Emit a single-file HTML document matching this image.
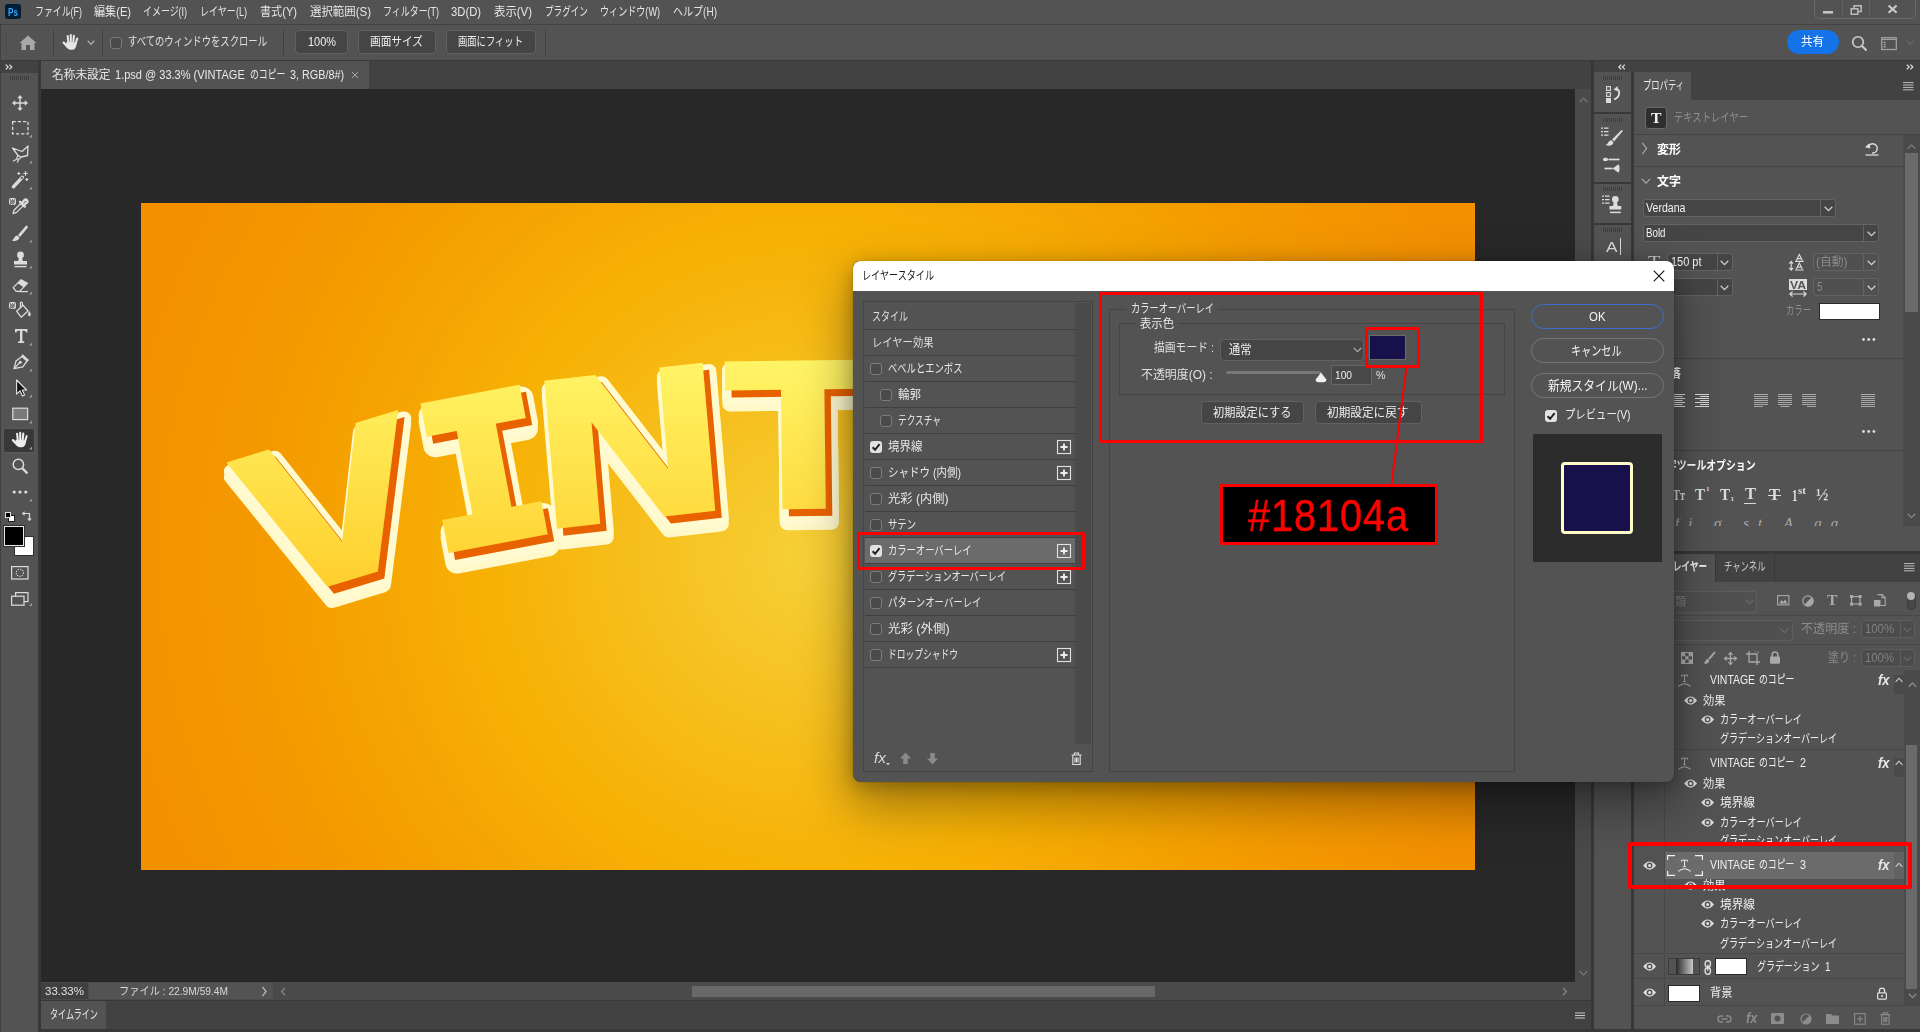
<!DOCTYPE html>
<html lang="ja"><head><meta charset="utf-8"><title>Photoshop - レイヤースタイル</title>
<style>
html,body{margin:0;padding:0;}
body{width:1920px;height:1032px;overflow:hidden;position:relative;background:#535353;font-family:"Liberation Sans","Noto Sans CJK JP",sans-serif;}
.b{position:absolute;box-sizing:border-box;}
.t{position:absolute;white-space:nowrap;transform-origin:0 50%;display:block;}
svg{overflow:visible;}

</style></head><body>
<div class="b" style="left:0px;top:0px;width:1920px;height:24px;background:#535353;"></div>
<div class="b" style="left:0px;top:24px;width:1920px;height:1px;background:#424242;"></div>
<div class="b" style="left:5px;top:4px;width:16px;height:15px;background:#001e36;border-radius:3px;"></div>
<span class="t" style="left:8.3px;top:3.6px;font-size:10.5px;line-height:16.5px;color:#31a8ff;font-weight:700;transform:scaleX(0.779);">Ps</span>
<span class="t" style="left:35px;top:2.5px;font-size:12px;line-height:18px;color:#e6e6e6;transform:scaleX(0.742);">ファイル(F)</span>
<span class="t" style="left:94px;top:2.5px;font-size:12px;line-height:18px;color:#e6e6e6;transform:scaleX(0.925);">編集(E)</span>
<span class="t" style="left:143px;top:2.5px;font-size:12px;line-height:18px;color:#e6e6e6;transform:scaleX(0.745);">イメージ(I)</span>
<span class="t" style="left:200px;top:2.5px;font-size:12px;line-height:18px;color:#e6e6e6;transform:scaleX(0.754);">レイヤー(L)</span>
<span class="t" style="left:260px;top:2.5px;font-size:12px;line-height:18px;color:#e6e6e6;transform:scaleX(0.925);">書式(Y)</span>
<span class="t" style="left:310px;top:2.5px;font-size:12px;line-height:18px;color:#e6e6e6;transform:scaleX(0.953);">選択範囲(S)</span>
<span class="t" style="left:383px;top:2.5px;font-size:12px;line-height:18px;color:#e6e6e6;transform:scaleX(0.746);">フィルター(T)</span>
<span class="t" style="left:451px;top:2.5px;font-size:12px;line-height:18px;color:#e6e6e6;transform:scaleX(0.938);">3D(D)</span>
<span class="t" style="left:494px;top:2.5px;font-size:12px;line-height:18px;color:#e6e6e6;transform:scaleX(0.950);">表示(V)</span>
<span class="t" style="left:545px;top:2.5px;font-size:12px;line-height:18px;color:#e6e6e6;transform:scaleX(0.716);">プラグイン</span>
<span class="t" style="left:600px;top:2.5px;font-size:12px;line-height:18px;color:#e6e6e6;transform:scaleX(0.756);">ウィンドウ(W)</span>
<span class="t" style="left:673px;top:2.5px;font-size:12px;line-height:18px;color:#e6e6e6;transform:scaleX(0.835);">ヘルプ(H)</span>
<svg class="b" style="left:1814px;top:0px;" width="104" height="20" viewBox="0 0 104 20"><path d="M0.5 0 V13 Q0.5 18.5 6 18.5 H96 Q101.5 18.5 101.5 13 V0" fill="none" stroke="#6a6a6a" stroke-width="1"/>
<path d="M28.5 0 V18 M55.5 0 V18" stroke="#626262" stroke-width="1"/>
<rect x="9" y="11" width="10" height="2.6" fill="#c4c4c4"/>
<path d="M37.2 8.8 h6.6 v5.4 h-6.6 z M40 8.4 v-2.6 h7.2 v5.6 h-3" fill="none" stroke="#bcbcbc" stroke-width="1.5"/>
<path d="M74.6 5.4 l8 7.4 M82.6 5.4 l-8 7.4" stroke="#c8c8c8" stroke-width="2.1"/></svg>
<div class="b" style="left:0px;top:25px;width:1920px;height:35px;background:#535353;"></div>
<div class="b" style="left:0px;top:60px;width:1920px;height:1px;background:#3a3a3a;"></div>
<div class="b" style="left:5px;top:33px;width:2px;height:19px;background:repeating-linear-gradient(#484848 0 1px,transparent 1px 2px);"></div>
<svg class="b" style="left:19px;top:35px;" width="18" height="16" viewBox="0 0 18 16"><path d="M9 0.5 L0.5 8 H2.5 V15 H7 V10 H11 V15 H15.5 V8 H17.5 Z" fill="#a8a8a8"/></svg>
<div class="b" style="left:53px;top:30px;width:1px;height:25px;background:#404040;"></div>
<svg class="b" style="left:61.5px;top:32.5px;" width="18" height="18" viewBox="0 0 18 18"><path d="M4.2 9.2 C4 11.5 4 13.6 5.6 15.4 C7.2 17.2 11.8 17.2 13.2 15.2 C14.4 13.4 14.6 11.4 14.6 9.8 Z" fill="#e6e6e6"/><path d="M6.4 10 L5.7 3.1 M8.8 10 L8.8 2.1 M11.2 10 L11.9 2.9 M13.5 11 L15.2 5.6" stroke="#e6e6e6" stroke-width="2.1" stroke-linecap="round" fill="none"/><path d="M5.6 14 L1.6 9.6" stroke="#e6e6e6" stroke-width="2.3" stroke-linecap="round" fill="none"/></svg>
<svg class="b" style="left:87px;top:40px;" width="8" height="6" viewBox="0 0 8 6"><path d="M0.7 0.8 L4 4.2 L7.3 0.8" fill="none" stroke="#aaa" stroke-width="1.3"/></svg>
<div class="b" style="left:102px;top:30px;width:1px;height:25px;background:#404040;"></div>
<div class="b" style="left:110px;top:37px;width:12px;height:12px;background:#4a4a4a;border:1px solid #7a7a7a;border-radius:3px;"></div>
<span class="t" style="left:128px;top:33.0px;font-size:12px;line-height:18px;color:#e0e0e0;transform:scaleX(0.778);">すべてのウィンドウをスクロール</span>
<div class="b" style="left:283px;top:30px;width:1px;height:25px;background:#404040;"></div>
<div class="b" style="left:295px;top:30px;width:53px;height:24px;background:#454545;border:1px solid #616161;border-radius:4px;"></div>
<span class="t" style="left:308px;top:33.0px;font-size:12px;line-height:18px;color:#f0f0f0;transform:scaleX(0.912);">100%</span>
<div class="b" style="left:358px;top:30px;width:78px;height:24px;background:#454545;border:1px solid #616161;border-radius:4px;"></div>
<span class="t" style="left:370px;top:33.0px;font-size:12px;line-height:18px;color:#f0f0f0;transform:scaleX(0.889);">画面サイズ</span>
<div class="b" style="left:446px;top:30px;width:90px;height:24px;background:#454545;border:1px solid #616161;border-radius:4px;"></div>
<span class="t" style="left:458px;top:33.0px;font-size:12px;line-height:18px;color:#f0f0f0;transform:scaleX(0.776);">画面にフィット</span>
<div class="b" style="left:545px;top:30px;width:1px;height:25px;background:#404040;"></div>
<div class="b" style="left:1787px;top:30px;width:52px;height:24px;background:#1473e6;border-radius:12px;"></div>
<span class="t" style="left:1801px;top:33.0px;font-size:12px;line-height:18px;color:#fff;transform:scaleX(0.958);">共有</span>
<svg class="b" style="left:1851px;top:35px;" width="18" height="18" viewBox="0 0 18 18"><circle cx="7" cy="7" r="5.3" fill="none" stroke="#d0d0d0" stroke-width="1.6"/><path d="M11 11 L15.5 15.5" stroke="#d0d0d0" stroke-width="2"/></svg>
<svg class="b" style="left:1881px;top:37px;" width="17" height="14" viewBox="0 0 17 14"><rect x="0.7" y="0.7" width="14.6" height="11.8" fill="none" stroke="#a0a0a0" stroke-width="1.3"/><path d="M0.7 2.4 H15.3" stroke="#a0a0a0" stroke-width="1.2"/><path d="M2.6 4.6 h2 v1.4 h-2 z M2.6 6.8 h2 v1.4 h-2 z M2.6 9 h2 v1.4 h-2 z" fill="#a0a0a0"/></svg>
<svg class="b" style="left:1906px;top:40px;" width="8" height="6" viewBox="0 0 8 6"><path d="M0.7 0.8 L4 4.2 L7.3 0.8" fill="none" stroke="#6a6a6a" stroke-width="1.2"/></svg>
<div class="b" style="left:0px;top:61px;width:38px;height:971px;background:#535353;"></div>
<div class="b" style="left:0px;top:61px;width:38px;height:12px;background:#424242;"></div>
<div class="b" style="left:38px;top:61px;width:3px;height:971px;background:#383838;"></div>
<svg class="b" style="left:5px;top:64px;" width="8" height="6" viewBox="0 0 8 6"><path d="M0.8 0.6 L3.2 3 L0.8 5.4 M4.4 0.6 L6.8 3 L4.4 5.4" fill="none" stroke="#e0e0e0" stroke-width="1.2"/></svg>
<div class="b" style="left:10px;top:76px;width:19px;height:4px;background:repeating-linear-gradient(90deg,#3e3e3e 0 1px,transparent 1px 2px);"></div>
<div class="b" style="left:0px;top:25px;width:1px;height:1007px;background:#404040;"></div>
<div class="b" style="left:41px;top:61px;width:1553px;height:28px;background:#424242;"></div>
<div class="b" style="left:41px;top:61px;width:328px;height:28px;background:#535353;"></div>
<span class="t" style="left:51.5px;top:66.0px;font-size:12px;line-height:18px;color:#e8e8e8;transform:scaleX(0.975);">名称未設定</span>
<span class="t" style="left:115.3px;top:66.0px;font-size:12px;line-height:18px;color:#e8e8e8;transform:scaleX(0.918);">1.psd @ 33.3% (VINTAGE</span>
<span class="t" style="left:249.8px;top:66.0px;font-size:12px;line-height:18px;color:#e8e8e8;transform:scaleX(0.739);">のコピー</span>
<span class="t" style="left:289.7px;top:66.0px;font-size:12px;line-height:18px;color:#e8e8e8;transform:scaleX(0.900);">3, RGB/8#)</span>
<svg class="b" style="left:351px;top:71px;" width="8" height="8" viewBox="0 0 8 8"><path d="M0.8 0.8 L7.2 7.2 M7.2 0.8 L0.8 7.2" stroke="#aaa" stroke-width="1"/></svg>
<div class="b" style="left:41px;top:89px;width:1534px;height:893px;background:#282828;"></div>
<div class="b" style="left:141px;top:203px;width:1334px;height:667px;background:radial-gradient(circle 760px at 50% 53%,#f6d038 0%,#f6c01f 21%,#f7b105 42%,#f49b00 70%,#f39000 93%);"></div>
<div class="b" style="left:1575px;top:89px;width:16px;height:893px;background:#4a4a4a;"></div>
<div class="b" style="left:1591px;top:61px;width:3px;height:971px;background:#383838;"></div>
<svg class="b" style="left:1579px;top:97px;" width="9" height="6" viewBox="0 0 9 6"><path d="M0.7 5 L4.5 1.2 L8.3 5" fill="none" stroke="#777" stroke-width="1.2"/></svg>
<svg class="b" style="left:1579px;top:970px;" width="9" height="6" viewBox="0 0 9 6"><path d="M0.7 1 L4.5 4.8 L8.3 1" fill="none" stroke="#777" stroke-width="1.2"/></svg>
<div class="b" style="left:41px;top:982px;width:1550px;height:18px;background:#4a4a4a;"></div>
<div class="b" style="left:41px;top:983px;width:47px;height:16px;background:#404040;"></div>
<div class="b" style="left:89px;top:983px;width:184px;height:16px;background:#535353;"></div>
<span class="t" style="left:45px;top:982.5px;font-size:11px;line-height:17px;color:#e0e0e0;transform:scaleX(1.045);">33.33%</span>
<span class="t" style="left:119px;top:982.5px;font-size:11px;line-height:17px;color:#d8d8d8;transform:scaleX(0.929);">ファイル : 22.9M/59.4M</span>
<svg class="b" style="left:261px;top:986px;" width="7" height="11" viewBox="0 0 7 11"><path d="M1.5 1 L5 5.5 L1.5 10" fill="none" stroke="#ccc" stroke-width="1.2"/></svg>
<svg class="b" style="left:280px;top:987px;" width="6" height="9" viewBox="0 0 6 9"><path d="M5 1 L1.5 4.5 L5 8" fill="none" stroke="#888" stroke-width="1.2"/></svg>
<svg class="b" style="left:1562px;top:987px;" width="6" height="9" viewBox="0 0 6 9"><path d="M1 1 L4.5 4.5 L1 8" fill="none" stroke="#888" stroke-width="1.2"/></svg>
<div class="b" style="left:692px;top:986px;width:463px;height:11px;background:#686868;"></div>
<div class="b" style="left:41px;top:1000px;width:1550px;height:32px;background:#424242;"></div>
<div class="b" style="left:41px;top:1000px;width:1550px;height:1px;background:#383838;"></div>
<div class="b" style="left:41px;top:1001px;width:65px;height:28px;background:#535353;"></div>
<span class="t" style="left:50px;top:1006.0px;font-size:12px;line-height:18px;color:#e8e8e8;transform:scaleX(0.674);">タイムライン</span>
<svg class="b" style="left:1575px;top:1012px;" width="11" height="8" viewBox="0 0 11 8"><path d="M0 1 H10 M0 3.5 H10 M0 6 H10" stroke="#ccc" stroke-width="1"/></svg>
<div class="b" style="left:41px;top:1029px;width:1550px;height:3px;background:#383838;"></div>
<svg class="b" style="left:141px;top:203px;overflow:hidden" width="1334" height="667" viewBox="141 203 1334 667"><defs><linearGradient id="vg" gradientUnits="userSpaceOnUse" x1="0" y1="358" x2="0" y2="600"><stop offset="0" stop-color="#fff567"/><stop offset="1" stop-color="#ffcd2a"/></linearGradient>
<mask id="vm" maskUnits="userSpaceOnUse" x="141" y="203" width="1334" height="667"><g font-size="203.7" font-weight="700"><text transform="translate(226.3 462.6) rotate(-17.0) skewX(-1.2) translate(0 0) scale(1.153 1.000)" x="-1.0" y="148.5" font-family="'DejaVu Sans','Liberation Sans',sans-serif" fill="#fff" vector-effect="non-scaling-stroke">V</text><text transform="translate(420.5 403.3) rotate(-10.7) translate(4.5 4.5) scale(1.035 0.966)" x="-17.1" y="148.5" font-family="'DejaVu Sans Mono','Liberation Mono',monospace" fill="#fff" vector-effect="non-scaling-stroke" stroke="#fff" stroke-width="9.0">I</text><text transform="translate(544.4 380.7) rotate(-6.5) skewX(-1.6) translate(0 0) scale(1.197 1.000)" x="-18.7" y="148.5" font-family="'DejaVu Sans','Liberation Sans',sans-serif" fill="#fff" vector-effect="non-scaling-stroke">N</text><text transform="translate(724.7 361.4) rotate(-0.7) translate(0 0) scale(1.132 1.000)" x="-1.0" y="148.5" font-family="'DejaVu Sans','Liberation Sans',sans-serif" fill="#fff" vector-effect="non-scaling-stroke">T</text></g></mask></defs>
<g font-size="203.7" font-weight="700" stroke-linejoin="round"><text transform="translate(231.6 476.6) rotate(-17.0) skewX(-1.2) translate(0 0) scale(1.153 1.000)" x="-1.0" y="148.5" font-family="'DejaVu Sans','Liberation Sans',sans-serif" fill="#fff9c9" vector-effect="non-scaling-stroke" stroke="#fff9c9" stroke-width="15">V</text><text transform="translate(425.8 417.3) rotate(-10.7) translate(4.5 4.5) scale(1.035 0.966)" x="-17.1" y="148.5" font-family="'DejaVu Sans Mono','Liberation Mono',monospace" fill="#fff9c9" vector-effect="non-scaling-stroke" stroke="#fff9c9" stroke-width="24.0">I</text><text transform="translate(549.7 394.7) rotate(-6.5) skewX(-1.6) translate(0 0) scale(1.197 1.000)" x="-18.7" y="148.5" font-family="'DejaVu Sans','Liberation Sans',sans-serif" fill="#fff9c9" vector-effect="non-scaling-stroke" stroke="#fff9c9" stroke-width="15">N</text><text transform="translate(730.0 375.4) rotate(-0.7) translate(0 0) scale(1.132 1.000)" x="-1.0" y="148.5" font-family="'DejaVu Sans','Liberation Sans',sans-serif" fill="#fff9c9" vector-effect="non-scaling-stroke" stroke="#fff9c9" stroke-width="15">T</text><text transform="translate(231.6 470.9) rotate(-17.0) skewX(-1.2) translate(0 0) scale(1.153 1.000)" x="-1.0" y="148.5" font-family="'DejaVu Sans','Liberation Sans',sans-serif" fill="#fffad0" vector-effect="non-scaling-stroke" stroke="#fffad0" stroke-width="15">V</text><text transform="translate(425.8 411.6) rotate(-10.7) translate(4.5 4.5) scale(1.035 0.966)" x="-17.1" y="148.5" font-family="'DejaVu Sans Mono','Liberation Mono',monospace" fill="#fffad0" vector-effect="non-scaling-stroke" stroke="#fffad0" stroke-width="24.0">I</text><text transform="translate(549.7 389.0) rotate(-6.5) skewX(-1.6) translate(0 0) scale(1.197 1.000)" x="-18.7" y="148.5" font-family="'DejaVu Sans','Liberation Sans',sans-serif" fill="#fffad0" vector-effect="non-scaling-stroke" stroke="#fffad0" stroke-width="15">N</text><text transform="translate(730.0 369.7) rotate(-0.7) translate(0 0) scale(1.132 1.000)" x="-1.0" y="148.5" font-family="'DejaVu Sans','Liberation Sans',sans-serif" fill="#fffad0" vector-effect="non-scaling-stroke" stroke="#fffad0" stroke-width="15">T</text></g>
<g font-size="203.7" font-weight="700"><text transform="translate(232.8 469.6) rotate(-17.0) skewX(-1.2) translate(0 0) scale(1.153 1.000)" x="-1.0" y="148.5" font-family="'DejaVu Sans','Liberation Sans',sans-serif" fill="#e96200" vector-effect="non-scaling-stroke">V</text><text transform="translate(427.0 410.3) rotate(-10.7) translate(4.5 4.5) scale(1.035 0.966)" x="-17.1" y="148.5" font-family="'DejaVu Sans Mono','Liberation Mono',monospace" fill="#e96200" vector-effect="non-scaling-stroke" stroke="#e96200" stroke-width="9.0">I</text><text transform="translate(550.9 387.7) rotate(-6.5) skewX(-1.6) translate(0 0) scale(1.197 1.000)" x="-18.7" y="148.5" font-family="'DejaVu Sans','Liberation Sans',sans-serif" fill="#e96200" vector-effect="non-scaling-stroke">N</text><text transform="translate(731.2 368.4) rotate(-0.7) translate(0 0) scale(1.132 1.000)" x="-1.0" y="148.5" font-family="'DejaVu Sans','Liberation Sans',sans-serif" fill="#e96200" vector-effect="non-scaling-stroke">T</text></g>
<rect x="141" y="203" width="1334" height="667" fill="url(#vg)" mask="url(#vm)"/></svg>
<div class="b" style="left:3px;top:428px;width:32px;height:25px;background:#383838;border:1px solid #5a5a5a;border-radius:3px;"></div>
<svg class="b" style="left:8px;top:90.5px;" width="24" height="24" viewBox="0 0 24 24"><path d="M12 5 V19 M5 12 H19" stroke="#dcdcdc" stroke-width="1.4"/><path d="M9.8 7 L12 4.4 L14.2 7 Z M9.8 17 L12 19.6 L14.2 17 Z M7 9.8 L4.4 12 L7 14.2 Z M17 9.8 L19.6 12 L17 14.2 Z" fill="#dcdcdc" stroke="#dcdcdc" stroke-width="0.6" stroke-linejoin="round"/></svg>
<svg class="b" style="left:8px;top:115.5px;" width="24" height="24" viewBox="0 0 24 24"><rect x="4.6" y="5.6" width="15.4" height="12.2" fill="none" stroke="#dcdcdc" stroke-width="1.3" stroke-dasharray="3.2 2"/><path d="M24 18.4 V21.4 H21 Z" fill="#9a9a9a"/></svg>
<svg class="b" style="left:8px;top:141.5px;" width="24" height="24" viewBox="0 0 24 24"><path d="M4.5 6 L14 9.5 L20 4 L19.5 13.5 L11.5 15.5 Z" fill="none" stroke="#dcdcdc" stroke-width="1.3" stroke-linejoin="round"/><circle cx="10.6" cy="15.6" r="1.7" fill="#535353" stroke="#dcdcdc" stroke-width="1.1"/><path d="M9.4 16.8 L5 19.2 M10.8 17.4 L9.2 20.5" stroke="#dcdcdc" stroke-width="1.2"/><path d="M24 18.4 V21.4 H21 Z" fill="#9a9a9a"/></svg>
<svg class="b" style="left:8px;top:168px;" width="24" height="24" viewBox="0 0 24 24"><path d="M5.4 18.8 L14.4 9.2" stroke="#dcdcdc" stroke-width="3.4" stroke-linecap="round"/><path d="M13 10.8 L14.6 9" stroke="#535353" stroke-width="1.6"/><path d="M17.5 3.2 V7.8 M15.2 5.5 H19.8 M10.8 4 V7 M9.3 5.5 H12.3 M18.8 10 V13 M17.3 11.5 H20.3" stroke="#dcdcdc" stroke-width="1.2"/><path d="M24 18.4 V21.4 H21 Z" fill="#9a9a9a"/></svg>
<svg class="b" style="left:8px;top:194px;" width="24" height="24" viewBox="0 0 24 24"><path d="M5 19.6 L6.2 16 L13 9.2 L15.4 11.6 L8.6 18.4 Z" fill="none" stroke="#dcdcdc" stroke-width="1.3" stroke-linejoin="round"/><path d="M12 7.8 L16.8 12.6 M13.6 9.4 L17 5.6 A1.9 1.9 0 0 1 19.4 8 L15.6 11.4" stroke="#dcdcdc" stroke-width="2.4" stroke-linecap="round" fill="none"/><rect x="1" y="4" width="7" height="7" rx="2" fill="#dcdcdc"/><path d="M2 5.5h1v1h-1z M4 5.5h1v1h-1z M6 5.5h1v1h-1z M3 6.5h1v1h-1z M5 6.5h1v1h-1z M2 7.5h1v1h-1z M4 7.5h1v1h-1z M6 7.5h1v1h-1z M3 8.5h1v1h-1z M5 8.5h1v1h-1z M2 9.5h1v1h-1z M4 9.5h1v1h-1z" fill="#2a2a2a"/></svg>
<svg class="b" style="left:8px;top:220.5px;" width="24" height="24" viewBox="0 0 24 24"><path d="M18.2 4.6 L10 14 L12 16 L20 6.2 Q19.8 4.6 18.2 4.6 Z" fill="#dcdcdc"/><path d="M9.2 14.6 C6.4 14.6 6.6 18.2 4 19.4 C8 21 11.4 19 11.4 16.6 Z" fill="#dcdcdc"/><path d="M24 18.4 V21.4 H21 Z" fill="#9a9a9a"/></svg>
<svg class="b" style="left:8px;top:246.5px;" width="24" height="24" viewBox="0 0 24 24"><circle cx="12.5" cy="8" r="3.4" fill="#dcdcdc"/><path d="M11 10 L10.2 14 H6 V17.5 H19 V14 H14.8 L14 10 Z" fill="#dcdcdc"/><path d="M6.5 19.6 H18.5" stroke="#dcdcdc" stroke-width="1.4"/><path d="M24 18.4 V21.4 H21 Z" fill="#9a9a9a"/></svg>
<svg class="b" style="left:8px;top:272.5px;" width="24" height="24" viewBox="0 0 24 24"><path d="M5.2 14.6 L13.2 6.8 L19.4 10.4 L11.6 18.4 H8.2 Z" fill="none" stroke="#dcdcdc" stroke-width="1.3" stroke-linejoin="round"/><path d="M9.8 10.2 L13.2 6.8 L19.4 10.4 L15.6 14.2 Z" fill="#dcdcdc"/><path d="M11.6 18.6 H20" stroke="#dcdcdc" stroke-width="1.2"/><path d="M24 18.4 V21.4 H21 Z" fill="#9a9a9a"/></svg>
<svg class="b" style="left:8px;top:298px;" width="24" height="24" viewBox="0 0 24 24"><path d="M8.6 13.2 L15 7.2 L20 13 L13.2 19.2 Z" fill="none" stroke="#dcdcdc" stroke-width="1.3" stroke-linejoin="round"/><path d="M12.4 9.6 V4.8 Q13.4 3.4 14.4 5 V8" fill="none" stroke="#dcdcdc" stroke-width="1.2"/><path d="M21.2 13.6 Q23.4 17 21.4 18.2 Q19.4 17.4 21.2 13.6 Z" fill="#dcdcdc" stroke="#dcdcdc" stroke-width="0.8"/><rect x="1" y="4" width="7" height="7" rx="2" fill="#dcdcdc"/><path d="M2 5.5h1v1h-1z M4 5.5h1v1h-1z M6 5.5h1v1h-1z M3 6.5h1v1h-1z M5 6.5h1v1h-1z M2 7.5h1v1h-1z M4 7.5h1v1h-1z M6 7.5h1v1h-1z M3 8.5h1v1h-1z M5 8.5h1v1h-1z M2 9.5h1v1h-1z M4 9.5h1v1h-1z" fill="#2a2a2a"/></svg>
<svg class="b" style="left:8px;top:324px;" width="24" height="24" viewBox="0 0 24 24"><path d="M7 5 H19.4 V8.4 H18 Q17.8 6.8 16.4 6.8 H14.4 V16.6 Q14.4 17.6 16.2 17.6 V19 H10.2 V17.6 Q12 17.6 12 16.6 V6.8 H10 Q8.6 6.8 8.4 8.4 H7 Z" fill="#dcdcdc"/><path d="M24 18.4 V21.4 H21 Z" fill="#9a9a9a"/></svg>
<svg class="b" style="left:8px;top:350px;" width="24" height="24" viewBox="0 0 24 24"><path d="M6 18.6 L8 11 L14 6.4 L19 11 L14.8 16.8 Z" fill="none" stroke="#dcdcdc" stroke-width="1.3" stroke-linejoin="round"/><path d="M6 18.6 L11.4 13" stroke="#dcdcdc" stroke-width="1.1"/><circle cx="12.2" cy="12.2" r="1.5" fill="#dcdcdc"/><path d="M14 5 L20.4 10.8" stroke="#dcdcdc" stroke-width="2"/><path d="M24 18.4 V21.4 H21 Z" fill="#9a9a9a"/></svg>
<svg class="b" style="left:8px;top:376px;" width="24" height="24" viewBox="0 0 24 24"><path d="M8.6 4 V18.2 L12 14.8 L14.4 20 L16.6 19 L14.2 14 H18.6 Z" fill="#111" stroke="#e4e4e4" stroke-width="1.1" stroke-linejoin="round"/><path d="M24 18.4 V21.4 H21 Z" fill="#9a9a9a"/></svg>
<svg class="b" style="left:8px;top:402px;" width="24" height="24" viewBox="0 0 24 24"><rect x="4.8" y="6.2" width="14.8" height="11.4" fill="#7a7a7a" stroke="#dcdcdc" stroke-width="1.2"/><path d="M24 18.4 V21.4 H21 Z" fill="#9a9a9a"/></svg>
<svg class="b" style="left:8px;top:428px;" width="24" height="24" viewBox="0 0 24 24"><g transform="translate(3.4,2.6)"><path d="M4.2 9.2 C4 11.5 4 13.6 5.6 15.4 C7.2 17.2 11.8 17.2 13.2 15.2 C14.4 13.4 14.6 11.4 14.6 9.8 Z" fill="#ececec"/><path d="M6.4 10 L5.7 3.1 M8.8 10 L8.8 2.1 M11.2 10 L11.9 2.9 M13.5 11 L15.2 5.6" stroke="#ececec" stroke-width="2.1" stroke-linecap="round" fill="none"/><path d="M5.6 14 L1.6 9.6" stroke="#ececec" stroke-width="2.3" stroke-linecap="round" fill="none"/></g><path d="M24 18.4 V21.4 H21 Z" fill="#9a9a9a"/></svg>
<svg class="b" style="left:8px;top:454px;" width="24" height="24" viewBox="0 0 24 24"><circle cx="10.4" cy="10.4" r="5.2" fill="none" stroke="#dcdcdc" stroke-width="1.5"/><path d="M14.4 14.4 L19.4 19.4" stroke="#dcdcdc" stroke-width="2.2"/></svg>
<svg class="b" style="left:8px;top:480px;" width="24" height="24" viewBox="0 0 24 24"><circle cx="6.2" cy="12" r="1.6" fill="#dcdcdc"/><circle cx="12" cy="12" r="1.6" fill="#dcdcdc"/><circle cx="17.8" cy="12" r="1.6" fill="#dcdcdc"/><path d="M24 18.4 V21.4 H21 Z" fill="#9a9a9a"/></svg>
<div class="b" style="left:5px;top:512px;width:6px;height:6px;background:#000;border:1px solid #ddd;"></div>
<div class="b" style="left:8px;top:515px;width:7px;height:7px;background:#fff;border:1px solid #222;"></div>
<div class="b" style="left:5px;top:512px;width:6px;height:6px;background:#000;border:1px solid #ddd;"></div>
<svg class="b" style="left:21px;top:510px;" width="12" height="12" viewBox="0 0 12 12"><path d="M3 3.5 H8.5 V9" fill="none" stroke="#dcdcdc" stroke-width="1.2"/><path d="M3.6 1.2 L0.8 3.5 L3.6 5.8 Z M6.2 8.4 L8.5 11.2 L10.8 8.4 Z" fill="#dcdcdc"/></svg>
<div class="b" style="left:14px;top:536px;width:20px;height:20px;background:#fff;border:1px solid #303030;"></div>
<div class="b" style="left:4px;top:526px;width:20px;height:20px;background:#000;border:1.5px solid #e8e8e8;box-shadow:0 0 0 1px #303030;"></div>
<svg class="b" style="left:11px;top:566px;" width="18" height="14" viewBox="0 0 18 14"><rect x="0.6" y="0.6" width="16.4" height="12.4" fill="none" stroke="#dcdcdc" stroke-width="1.2"/><circle cx="8.8" cy="6.8" r="3.6" fill="none" stroke="#dcdcdc" stroke-width="1.1" stroke-dasharray="1.2 1.2"/></svg>
<svg class="b" style="left:11px;top:592px;" width="22" height="16" viewBox="0 0 22 16"><rect x="4.6" y="0.6" width="12.4" height="9" fill="none" stroke="#dcdcdc" stroke-width="1.2"/><rect x="0.6" y="4.2" width="12.4" height="9" fill="#535353" stroke="#dcdcdc" stroke-width="1.2"/><path d="M21 11 V14 H18 Z" fill="#9a9a9a"/></svg>
<div class="b" style="left:1594px;top:61px;width:326px;height:971px;background:#535353;"></div>
<div class="b" style="left:1594px;top:61px;width:326px;height:11px;background:#424242;"></div>
<div class="b" style="left:1631px;top:72px;width:3px;height:960px;background:#383838;"></div>
<svg class="b" style="left:1618px;top:64px;" width="8" height="6" viewBox="0 0 8 6"><path d="M3.2 0.6 L0.8 3 L3.2 5.4 M6.8 0.6 L4.4 3 L6.8 5.4" fill="none" stroke="#e0e0e0" stroke-width="1.2"/></svg>
<svg class="b" style="left:1906px;top:64px;" width="8" height="6" viewBox="0 0 8 6"><path d="M0.8 0.6 L3.2 3 L0.8 5.4 M4.4 0.6 L6.8 3 L4.4 5.4" fill="none" stroke="#e0e0e0" stroke-width="1.2"/></svg>
<div class="b" style="left:1594px;top:112px;width:37px;height:2px;background:#383838;"></div>
<div class="b" style="left:1594px;top:182px;width:37px;height:2px;background:#383838;"></div>
<div class="b" style="left:1594px;top:222.5px;width:37px;height:2px;background:#383838;"></div>
<div class="b" style="left:1603px;top:76px;width:19px;height:4px;background:repeating-linear-gradient(90deg,#3e3e3e 0 1px,transparent 1px 2px);"></div>
<div class="b" style="left:1603px;top:118px;width:19px;height:4px;background:repeating-linear-gradient(90deg,#3e3e3e 0 1px,transparent 1px 2px);"></div>
<div class="b" style="left:1603px;top:187px;width:19px;height:4px;background:repeating-linear-gradient(90deg,#3e3e3e 0 1px,transparent 1px 2px);"></div>
<div class="b" style="left:1603px;top:228px;width:19px;height:4px;background:repeating-linear-gradient(90deg,#3e3e3e 0 1px,transparent 1px 2px);"></div>
<svg class="b" style="left:1606px;top:86px;" width="14" height="18" viewBox="0 0 14 18"><rect x="0.6" y="0.6" width="3.8" height="3.8" fill="none" stroke="#dcdcdc" stroke-width="1.1"/><rect x="0.6" y="6.6" width="3.8" height="3.8" fill="none" stroke="#dcdcdc" stroke-width="1.1"/><rect x="0" y="12" width="5" height="5" fill="#dcdcdc"/><path d="M8 13.5 C14.5 11 14.5 4 10.2 2.6" fill="none" stroke="#dcdcdc" stroke-width="1.8"/><path d="M7.6 3.6 L11.6 0 L11.8 5.4 Z" fill="#dcdcdc"/></svg>
<svg class="b" style="left:1601px;top:127px;" width="22" height="20" viewBox="0 0 22 20"><path d="M0 1.2 H2 M3 1.2 H7.5 M0 4.7 H2 M3 4.7 H7.5 M0 8.2 H2 M3 8.2 H7.5" stroke="#dcdcdc" stroke-width="1.3"/><path d="M20.5 3 L11 12.6 L13 14.6 L21.6 4.2 Q21.6 3 20.5 3 Z" fill="#dcdcdc"/><path d="M10.2 13.2 C7 13.5 7.5 17 4.5 18 C8.5 19.8 12.4 18 12.4 15.2 Z" fill="#dcdcdc"/></svg>
<svg class="b" style="left:1603px;top:157px;" width="18" height="16" viewBox="0 0 18 16"><path d="M0 2.5 C0 0.5 4 0 5.6 2.5 C4 5 0 4.5 0 2.5 Z" fill="#dcdcdc"/><path d="M5.6 2.5 H16.5" stroke="#dcdcdc" stroke-width="1.7"/><path d="M1.5 11.5 H9.5" stroke="#dcdcdc" stroke-width="1.7"/><path d="M9.5 11.5 L15.5 7.2 C17 9.8 17 13.2 15.5 15.8 Z" fill="#dcdcdc"/></svg>
<svg class="b" style="left:1602px;top:195px;" width="20" height="19" viewBox="0 0 20 19"><path d="M0 1.2 H2 M3 1.2 H7.5 M0 4.7 H2 M3 4.7 H7.5 M0 8.2 H2 M3 8.2 H7.5" stroke="#dcdcdc" stroke-width="1.3"/><circle cx="13.3" cy="4.2" r="3.3" fill="#dcdcdc"/><path d="M11.8 6 L11 11 H7.5 V14.5 H19.2 V11 H15.7 L14.8 6 Z" fill="#dcdcdc"/><path d="M8 17.4 H18.8" stroke="#dcdcdc" stroke-width="1.5"/></svg>
<span class="t" style="left:1606px;top:235.8px;font-size:15.5px;line-height:21.5px;color:#dcdcdc;transform:scaleX(1.112);">A</span>
<div class="b" style="left:1619.5px;top:237.5px;width:1px;height:17.5px;background:#dcdcdc;"></div>
<div class="b" style="left:1634px;top:72px;width:286px;height:28px;background:#424242;"></div>
<div class="b" style="left:1634px;top:72px;width:57px;height:28px;background:#535353;"></div>
<span class="t" style="left:1643px;top:77.0px;font-size:12px;line-height:18px;color:#ececec;transform:scaleX(0.692);">プロパティ</span>
<svg class="b" style="left:1903px;top:82px;" width="11" height="8" viewBox="0 0 11 8"><path d="M0 0.6 H10.5 M0 3 H10.5 M0 5.4 H10.5 M0 7.8 H10.5" stroke="#c8c8c8" stroke-width="0.9"/></svg>
<div class="b" style="left:1645px;top:107px;width:22px;height:22px;background:#2e2e2e;border:1px solid #686868;border-radius:3px;"></div>
<span class="t" style="left:1651px;top:107.5px;font-size:15px;line-height:21px;color:#f4f4f4;font-weight:700;font-family:'Liberation Serif',serif;transform:scaleX(1.048);">T</span>
<span class="t" style="left:1673.5px;top:109.0px;font-size:12px;line-height:18px;color:#909090;transform:scaleX(0.777);">テキストレイヤー</span>
<div class="b" style="left:1634px;top:133.5px;width:286px;height:1.5px;background:#444;"></div>
<div class="b" style="left:1903px;top:135px;width:17px;height:391px;background:#4a4a4a;"></div>
<svg class="b" style="left:1907px;top:144px;" width="9" height="6" viewBox="0 0 9 6"><path d="M0.7 4.8 L4.5 1 L8.3 4.8" fill="none" stroke="#777" stroke-width="1.3"/></svg>
<div class="b" style="left:1905px;top:153px;width:13px;height:159px;background:#6a6a6a;"></div>
<svg class="b" style="left:1907px;top:513px;" width="9" height="6" viewBox="0 0 9 6"><path d="M0.7 0.8 L4.5 4.6 L8.3 0.8" fill="none" stroke="#888" stroke-width="1.3"/></svg>
<svg class="b" style="left:1641px;top:142px;" width="7" height="13" viewBox="0 0 7 13"><path d="M1.3 0.8 L5.6 6.5 L1.3 12.2" fill="none" stroke="#aaa" stroke-width="1.2"/></svg>
<span class="t" style="left:1657px;top:140.5px;font-size:12px;line-height:18px;color:#fff;font-weight:700;transform:scaleX(0.999);">変形</span>
<svg class="b" style="left:1865px;top:142px;" width="14" height="14" viewBox="0 0 14 14"><path d="M3.2 5 A4.6 4.6 0 1 1 7 11" fill="none" stroke="#dcdcdc" stroke-width="1.5"/><path d="M0 5.2 L4.2 1.2 L5.4 6.6 Z" fill="#dcdcdc"/><path d="M0.5 13 H13.5" stroke="#dcdcdc" stroke-width="1.3"/></svg>
<div class="b" style="left:1634px;top:165.5px;width:269px;height:1.5px;background:#444;"></div>
<svg class="b" style="left:1641px;top:178px;" width="10" height="7" viewBox="0 0 10 7"><path d="M0.8 0.8 L5 5.2 L9.2 0.8" fill="none" stroke="#aaa" stroke-width="1.2"/></svg>
<span class="t" style="left:1657px;top:173.0px;font-size:12px;line-height:18px;color:#fff;font-weight:700;transform:scaleX(0.999);">文字</span>
<div class="b" style="left:1642.5px;top:198.5px;width:193.5px;height:18px;background:#454545;border:1px solid #636363;border-radius:3px;"></div>
<div class="b" style="left:1820px;top:199.5px;width:1px;height:16px;background:#636363;"></div>
<svg class="b" style="left:1823.5px;top:205.5px;" width="9" height="6" viewBox="0 0 9 6"><path d="M0.7 0.8 L4.5 4.6 L8.3 0.8" fill="none" stroke="#d0d0d0" stroke-width="1.3"/></svg>
<span class="t" style="left:1646px;top:198.5px;font-size:12px;line-height:18px;color:#f4f4f4;transform:scaleX(0.883);">Verdana</span>
<div class="b" style="left:1642.5px;top:223.5px;width:236.5px;height:18px;background:#454545;border:1px solid #636363;border-radius:3px;"></div>
<div class="b" style="left:1863px;top:224.5px;width:1px;height:16px;background:#636363;"></div>
<svg class="b" style="left:1866.5px;top:230.5px;" width="9" height="6" viewBox="0 0 9 6"><path d="M0.7 0.8 L4.5 4.6 L8.3 0.8" fill="none" stroke="#d0d0d0" stroke-width="1.3"/></svg>
<span class="t" style="left:1646px;top:223.5px;font-size:12px;line-height:18px;color:#f4f4f4;transform:scaleX(0.811);">Bold</span>
<span class="t" style="left:1647.5px;top:249.5px;font-size:17px;line-height:23px;color:#c8c8c8;font-family:'Liberation Serif',serif;transform:scaleX(1.203);">T</span>
<div class="b" style="left:1666.5px;top:252.5px;width:66px;height:18px;background:#454545;border:1px solid #636363;border-radius:3px;"></div>
<div class="b" style="left:1717px;top:253.5px;width:1px;height:16px;background:#636363;"></div>
<svg class="b" style="left:1720.25px;top:259.5px;" width="9" height="6" viewBox="0 0 9 6"><path d="M0.7 0.8 L4.5 4.6 L8.3 0.8" fill="none" stroke="#d0d0d0" stroke-width="1.3"/></svg>
<span class="t" style="left:1670.5px;top:252.5px;font-size:12px;line-height:18px;color:#f4f4f4;transform:scaleX(0.914);">150 pt</span>
<svg class="b" style="left:1789px;top:254px;" width="17" height="17" viewBox="0 0 17 17"><path d="M2.2 7.5 V16 M0.3 9.7 L2.2 7.3 L4.1 9.7 M0.3 13.8 L2.2 16.2 L4.1 13.8" fill="none" stroke="#dcdcdc" stroke-width="1.1"/><path d="M7.3 6.5 L10.3 0.5 L13.3 6.5 M8.3 4.6 H12.3 M6 7.4 H14.6" fill="none" stroke="#dcdcdc" stroke-width="1.1"/><path d="M7.3 15 L10.3 9 L13.3 15 M8.3 13.1 H12.3 M6 16 H14.6" fill="none" stroke="#dcdcdc" stroke-width="1.1"/></svg>
<div class="b" style="left:1813px;top:252.5px;width:66px;height:18px;background:#505050;border:1px solid #636363;border-radius:3px;"></div>
<div class="b" style="left:1863px;top:253.5px;width:1px;height:16px;background:#636363;"></div>
<svg class="b" style="left:1866.5px;top:259.5px;" width="9" height="6" viewBox="0 0 9 6"><path d="M0.7 0.8 L4.5 4.6 L8.3 0.8" fill="none" stroke="#d0d0d0" stroke-width="1.3"/></svg>
<span class="t" style="left:1816px;top:252.5px;font-size:12px;line-height:18px;color:#8a8a8a;transform:scaleX(0.984);">(自動)</span>
<div class="b" style="left:1666.5px;top:277.5px;width:66px;height:18px;background:#454545;border:1px solid #636363;border-radius:3px;"></div>
<div class="b" style="left:1717px;top:278.5px;width:1px;height:16px;background:#636363;"></div>
<svg class="b" style="left:1720.25px;top:284.5px;" width="9" height="6" viewBox="0 0 9 6"><path d="M0.7 0.8 L4.5 4.6 L8.3 0.8" fill="none" stroke="#d0d0d0" stroke-width="1.3"/></svg>
<div class="b" style="left:1789px;top:279px;width:18px;height:11px;background:#dcdcdc;"></div>
<span class="t" style="left:1790px;top:278.5px;font-size:11px;line-height:12px;color:#535353;font-weight:700;transform:scaleX(1.106);">VA</span>
<svg class="b" style="left:1789px;top:291px;" width="18" height="6" viewBox="0 0 18 6"><path d="M1 3 H17 M3.6 0.5 L0.8 3 L3.6 5.5 M14.4 0.5 L17.2 3 L14.4 5.5" fill="none" stroke="#dcdcdc" stroke-width="1.1"/></svg>
<div class="b" style="left:1813px;top:277.5px;width:66px;height:18px;background:#505050;border:1px solid #636363;border-radius:3px;"></div>
<div class="b" style="left:1863px;top:278.5px;width:1px;height:16px;background:#636363;"></div>
<svg class="b" style="left:1866.5px;top:284.5px;" width="9" height="6" viewBox="0 0 9 6"><path d="M0.7 0.8 L4.5 4.6 L8.3 0.8" fill="none" stroke="#d0d0d0" stroke-width="1.3"/></svg>
<span class="t" style="left:1816.5px;top:277.5px;font-size:12px;line-height:18px;color:#8a8a8a;transform:scaleX(0.822);">5</span>
<span class="t" style="left:1786px;top:302.0px;font-size:12px;line-height:18px;color:#8e8e8e;transform:scaleX(0.694);">カラー</span>
<div class="b" style="left:1818.5px;top:302.5px;width:61px;height:17px;background:#fff;border:1px solid #2a2a2a;"></div>
<svg class="b" style="left:1861.5px;top:337.8px;" width="14" height="3" viewBox="0 0 14 3"><circle cx="1.5" cy="1.5" r="1.4" fill="#dcdcdc"/><circle cx="6.7" cy="1.5" r="1.4" fill="#dcdcdc"/><circle cx="11.9" cy="1.5" r="1.4" fill="#dcdcdc"/></svg>
<div class="b" style="left:1634px;top:357.5px;width:269px;height:1.5px;background:#444;"></div>
<span class="t" style="left:1657px;top:365.0px;font-size:12px;line-height:18px;color:#fff;font-weight:700;transform:scaleX(0.999);">段落</span>
<svg class="b" style="left:1671px;top:394px;" width="14" height="14" viewBox="0 0 14 14"><path d="M0 0.5 H14 M2.5 2.5 H11.5 M0 4.5 H14 M2.5 6.5 H11.5 M0 8.5 H14 M2.5 10.5 H11.5 M0 12.5 H14 " stroke="#dcdcdc" stroke-width="1"/></svg>
<svg class="b" style="left:1695px;top:394px;" width="14" height="14" viewBox="0 0 14 14"><path d="M0 0.5 H14 M5 2.5 H14 M0 4.5 H14 M5 6.5 H14 M0 8.5 H14 M5 10.5 H14 M0 12.5 H14 " stroke="#dcdcdc" stroke-width="1"/></svg>
<svg class="b" style="left:1754px;top:394px;" width="14" height="14" viewBox="0 0 14 14"><path d="M0 0.5 H14 M0 2.5 H14 M0 4.5 H14 M0 6.5 H14 M0 8.5 H14 M0 10.5 H14 M0 12.5 H9 " stroke="#a8a8a8" stroke-width="1"/></svg>
<svg class="b" style="left:1778px;top:394px;" width="14" height="14" viewBox="0 0 14 14"><path d="M0 0.5 H14 M0 2.5 H14 M0 4.5 H14 M0 6.5 H14 M0 8.5 H14 M0 10.5 H14 M2.5 12.5 H11.5 " stroke="#a8a8a8" stroke-width="1"/></svg>
<svg class="b" style="left:1802px;top:394px;" width="14" height="14" viewBox="0 0 14 14"><path d="M0 0.5 H14 M0 2.5 H14 M0 4.5 H14 M0 6.5 H14 M0 8.5 H14 M0 10.5 H14 M5 12.5 H14 " stroke="#a8a8a8" stroke-width="1"/></svg>
<svg class="b" style="left:1861px;top:394px;" width="14" height="14" viewBox="0 0 14 14"><path d="M0 0.5 H14 M0 2.5 H14 M0 4.5 H14 M0 6.5 H14 M0 8.5 H14 M0 10.5 H14 M0 12.5 H14 " stroke="#a8a8a8" stroke-width="1"/></svg>
<svg class="b" style="left:1861.5px;top:429.8px;" width="14" height="3" viewBox="0 0 14 3"><circle cx="1.5" cy="1.5" r="1.4" fill="#dcdcdc"/><circle cx="6.7" cy="1.5" r="1.4" fill="#dcdcdc"/><circle cx="11.9" cy="1.5" r="1.4" fill="#dcdcdc"/></svg>
<div class="b" style="left:1634px;top:449.5px;width:269px;height:1.5px;background:#444;"></div>
<span class="t" style="left:1657px;top:456.7px;font-size:12px;line-height:18px;color:#fff;font-weight:700;transform:scaleX(0.821);">文字ツールオプション</span>
<span class="t" style="left:1673px;top:484.5px;font-size:15px;line-height:21px;color:#dcdcdc;font-weight:700;font-family:'Liberation Serif',serif;transform:scaleX(0.691);">Tт</span>
<span class="t" style="left:1695px;top:483.5px;font-size:16px;line-height:22px;color:#dcdcdc;font-weight:700;font-family:'Liberation Serif',serif;transform:scaleX(0.937);">T</span>
<span class="t" style="left:1706px;top:482.5px;font-size:7px;line-height:13px;color:#dcdcdc;font-weight:700;font-family:'Liberation Serif',serif;transform:scaleX(1.000);">1</span>
<span class="t" style="left:1720px;top:483.5px;font-size:16px;line-height:22px;color:#dcdcdc;font-weight:700;font-family:'Liberation Serif',serif;transform:scaleX(0.937);">T</span>
<span class="t" style="left:1730.5px;top:492.5px;font-size:7px;line-height:13px;color:#dcdcdc;font-weight:700;font-family:'Liberation Serif',serif;transform:scaleX(1.000);">1</span>
<span class="t" style="left:1744.5px;top:483.0px;font-size:16px;line-height:22px;color:#dcdcdc;font-weight:700;font-family:'Liberation Serif',serif;transform:scaleX(1.031);">T</span>
<div class="b" style="left:1744px;top:502.5px;width:12px;height:1.2px;background:#dcdcdc;"></div>
<span class="t" style="left:1768.5px;top:483.5px;font-size:16px;line-height:22px;color:#dcdcdc;font-weight:700;font-family:'Liberation Serif',serif;transform:scaleX(1.031);">T</span>
<div class="b" style="left:1767.5px;top:494.5px;width:13px;height:1.2px;background:#dcdcdc;"></div>
<span class="t" style="left:1791.5px;top:483.5px;font-size:17px;line-height:23px;color:#dcdcdc;font-weight:700;font-family:'Liberation Serif',serif;transform:scaleX(0.647);">1</span>
<span class="t" style="left:1798px;top:482.5px;font-size:10px;line-height:16px;color:#dcdcdc;font-weight:700;font-family:'Liberation Serif',serif;transform:scaleX(1.106);">st</span>
<span class="t" style="left:1816px;top:483.0px;font-size:17px;line-height:23px;color:#dcdcdc;font-weight:700;font-family:'Liberation Serif',serif;transform:scaleX(0.980);">½</span>
<div class="b" style="left:1670px;top:518px;width:170px;height:7.5px;overflow:hidden;"><span style="position:absolute;left:5px;top:-3px;font:italic 15px 'Liberation Serif',serif;color:#aaa;white-space:nowrap;letter-spacing:9px;word-spacing:0">fi &#x3c3; st A aa T 1st</span></div>
<div class="b" style="left:1634px;top:526px;width:286px;height:25px;background:#535353;"></div>
<div class="b" style="left:1594px;top:551px;width:326px;height:3px;background:#383838;"></div>
<div class="b" style="left:1594px;top:551px;width:37px;height:3px;background:#535353;"></div>
<div class="b" style="left:1634px;top:554px;width:286px;height:28px;background:#424242;"></div>
<div class="b" style="left:1634px;top:554px;width:81px;height:28px;background:#535353;"></div>
<div class="b" style="left:1715px;top:554px;width:1px;height:28px;background:#383838;"></div>
<div class="b" style="left:1774px;top:554px;width:1px;height:28px;background:#383838;"></div>
<span class="t" style="left:1673px;top:557.5px;font-size:12px;line-height:18px;color:#f4f4f4;font-weight:700;transform:scaleX(0.714);">レイヤー</span>
<span class="t" style="left:1724px;top:557.5px;font-size:12px;line-height:18px;color:#c8c8c8;transform:scaleX(0.696);">チャンネル</span>
<svg class="b" style="left:1904px;top:563px;" width="11" height="8" viewBox="0 0 11 8"><path d="M0 0.6 H10.5 M0 3 H10.5 M0 5.4 H10.5 M0 7.8 H10.5" stroke="#c8c8c8" stroke-width="0.9"/></svg>
<div class="b" style="left:1642px;top:590.5px;width:115px;height:22px;background:#505050;border:1px solid #5e5e5e;border-radius:3px;"></div>
<span class="t" style="left:1664px;top:592.5px;font-size:12px;line-height:18px;color:#7e7e7e;transform:scaleX(0.916);">種類</span>
<svg class="b" style="left:1745px;top:599px;" width="9" height="6" viewBox="0 0 9 6"><path d="M0.7 0.8 L4.5 4.6 L8.3 0.8" fill="none" stroke="#676767" stroke-width="1.3"/></svg>
<svg class="b" style="left:1777px;top:594.5px;" width="13" height="11" viewBox="0 0 13 11"><rect x="0.6" y="0.6" width="11.3" height="9.3" fill="none" stroke="#a9a9a9" stroke-width="1.1"/><path d="M2 8.5 L4.6 5 L6.3 7 L8 4.6 L10.6 8.5 Z" fill="#a9a9a9"/></svg>
<svg class="b" style="left:1802px;top:594.5px;" width="12" height="12" viewBox="0 0 12 12"><circle cx="6" cy="6" r="5.2" fill="none" stroke="#a9a9a9" stroke-width="1.2"/><path d="M9.7 2.3 A5.2 5.2 0 0 1 2.3 9.7 Z" fill="#a9a9a9"/></svg>
<span class="t" style="left:1827px;top:590.0px;font-size:15px;line-height:21px;color:#a9a9a9;font-weight:700;font-family:'Liberation Serif',serif;transform:scaleX(1.048);">T</span>
<svg class="b" style="left:1849.5px;top:595px;" width="12" height="11" viewBox="0 0 12 11"><rect x="1.6" y="1.6" width="8.4" height="7.4" fill="none" stroke="#a9a9a9" stroke-width="1.2"/><rect x="0" y="0" width="3" height="3" fill="#a9a9a9"/><rect x="8.6" y="0" width="3" height="3" fill="#a9a9a9"/><rect x="0" y="7.6" width="3" height="3" fill="#a9a9a9"/><rect x="8.6" y="7.6" width="3" height="3" fill="#a9a9a9"/></svg>
<svg class="b" style="left:1874px;top:594px;" width="12" height="13" viewBox="0 0 12 13"><path d="M3.5 0.6 H8 L11.2 3.8 V11.5 H6.5" fill="none" stroke="#a9a9a9" stroke-width="1.1"/><path d="M8 0.6 V3.8 H11.2" fill="none" stroke="#a9a9a9" stroke-width="1.1"/><rect x="0" y="6" width="6.5" height="6.5" fill="#a9a9a9"/></svg>
<div class="b" style="left:1906.5px;top:591.5px;width:9px;height:18px;background:#484848;border:1px solid #3a3a3a;border-radius:4.5px;"></div>
<div class="b" style="left:1907px;top:592px;width:8px;height:8px;background:#b4b4b4;border-radius:4px;"></div>
<div class="b" style="left:1634px;top:614.5px;width:286px;height:1px;background:#484848;"></div>
<div class="b" style="left:1642px;top:619.5px;width:150.5px;height:21.5px;background:#505050;border:1px solid #5e5e5e;border-radius:3px;"></div>
<svg class="b" style="left:1780px;top:628px;" width="9" height="6" viewBox="0 0 9 6"><path d="M0.7 0.8 L4.5 4.6 L8.3 0.8" fill="none" stroke="#676767" stroke-width="1.3"/></svg>
<span class="t" style="left:1801px;top:620.0px;font-size:12px;line-height:18px;color:#8c8c8c;transform:scaleX(1.006);">不透明度 :</span>
<div class="b" style="left:1860.5px;top:619.5px;width:54px;height:18.5px;background:#4c4c4c;border:1px solid #5e5e5e;border-radius:3px;"></div>
<div class="b" style="left:1899.5px;top:620.5px;width:1px;height:16.5px;background:#5e5e5e;"></div>
<span class="t" style="left:1864.5px;top:620.0px;font-size:12px;line-height:18px;color:#808080;transform:scaleX(0.945);">100%</span>
<svg class="b" style="left:1903px;top:626.5px;" width="9" height="6" viewBox="0 0 9 6"><path d="M0.7 0.8 L4.5 4.6 L8.3 0.8" fill="none" stroke="#676767" stroke-width="1.3"/></svg>
<div class="b" style="left:1634px;top:643.5px;width:286px;height:1px;background:#484848;"></div>
<svg class="b" style="left:1681px;top:652px;" width="12" height="12" viewBox="0 0 12 12"><rect x="0.5" y="0.5" width="11" height="11" fill="none" stroke="#a9a9a9" stroke-width="1"/><path d="M1 1 H4.3 V4.3 H1 Z M7.6 1 H11 V4.3 H7.6 Z M4.3 4.3 H7.6 V7.6 H4.3 Z M1 7.6 H4.3 V11 H1 Z M7.6 7.6 H11 V11 H7.6 Z" fill="#a9a9a9"/></svg>
<svg class="b" style="left:1703px;top:651px;" width="13" height="14" viewBox="0 0 13 14"><path d="M11.3 0.5 L5.2 7.2 L6.8 8.8 L12.6 1.8 Q12.4 0.5 11.3 0.5 Z" fill="#a9a9a9"/><path d="M4.6 7.8 C2.6 8 2.8 11 0.5 12.2 C3.4 13.5 6.3 11.8 6.3 9.5 Z" fill="#a9a9a9"/></svg>
<svg class="b" style="left:1724px;top:651.5px;" width="13" height="13" viewBox="0 0 13 13"><path d="M6.5 1 V12 M1 6.5 H12" stroke="#a9a9a9" stroke-width="1.3"/><path d="M4.4 2.8 L6.5 0.4 L8.6 2.8 M4.4 10.2 L6.5 12.6 L8.6 10.2 M2.8 4.4 L0.4 6.5 L2.8 8.6 M10.2 4.4 L12.6 6.5 L10.2 8.6" fill="none" stroke="#a9a9a9" stroke-width="1.2"/></svg>
<svg class="b" style="left:1746px;top:651px;" width="14" height="14" viewBox="0 0 14 14"><path d="M3 0 V11 H14 M0 3 H11 V14" fill="none" stroke="#a9a9a9" stroke-width="1.3"/><path d="M11.5 0.5 L13 2 M9 0.3 L9.7 1" stroke="#a9a9a9" stroke-width="1"/></svg>
<svg class="b" style="left:1770px;top:651px;" width="10" height="13" viewBox="0 0 10 13"><path d="M2.2 6 V3.8 A2.8 2.8 0 0 1 7.8 3.8 V6" fill="none" stroke="#a9a9a9" stroke-width="1.5"/><rect x="0" y="5.5" width="10" height="7.2" rx="1" fill="#a9a9a9"/></svg>
<span class="t" style="left:1828px;top:649.0px;font-size:12px;line-height:18px;color:#8c8c8c;transform:scaleX(0.913);">塗り :</span>
<div class="b" style="left:1860.5px;top:649px;width:54px;height:18px;background:#4c4c4c;border:1px solid #5e5e5e;border-radius:3px;"></div>
<div class="b" style="left:1899.5px;top:650px;width:1px;height:16px;background:#5e5e5e;"></div>
<span class="t" style="left:1864.5px;top:649.0px;font-size:12px;line-height:18px;color:#808080;transform:scaleX(0.945);">100%</span>
<svg class="b" style="left:1903px;top:655.5px;" width="9" height="6" viewBox="0 0 9 6"><path d="M0.7 0.8 L4.5 4.6 L8.3 0.8" fill="none" stroke="#676767" stroke-width="1.3"/></svg>
<div class="b" style="left:1634px;top:670px;width:30px;height:335px;background:#535353;"></div>
<div class="b" style="left:1664px;top:670px;width:1px;height:335px;background:#484848;"></div>
<div class="b" style="left:1904px;top:670px;width:16px;height:335px;background:#4a4a4a;"></div>
<svg class="b" style="left:1907.5px;top:682px;" width="9" height="6" viewBox="0 0 9 6"><path d="M0.7 4.8 L4.5 1 L8.3 4.8" fill="none" stroke="#8a8a8a" stroke-width="1.3"/></svg>
<div class="b" style="left:1906px;top:745px;width:11px;height:244px;background:#6a6a6a;"></div>
<svg class="b" style="left:1907.5px;top:993px;" width="9" height="6" viewBox="0 0 9 6"><path d="M0.7 0.8 L4.5 4.6 L8.3 0.8" fill="none" stroke="#8a8a8a" stroke-width="1.3"/></svg>
<svg class="b" style="left:1678px;top:673px;" width="13" height="14" viewBox="0 0 13 14"><path d="M3.5 3.6 V2.2 H9.5 V3.6 M6.5 2.2 V8.6 M5.2 8.6 H7.8" fill="none" stroke="#a9a9a9" stroke-width="1"/><path d="M0.3 13.4 Q6.5 8 12.7 13.4" fill="none" stroke="#a9a9a9" stroke-width="1.1"/></svg>
<span class="t" style="left:1710px;top:671.0px;font-size:12px;line-height:18px;color:#f0f0f0;transform:scaleX(0.869);">VINTAGE</span>
<span class="t" style="left:1759.3px;top:671.0px;font-size:12px;line-height:18px;color:#f0f0f0;transform:scaleX(0.735);">のコピー</span>
<div class="b" style="left:1893.5px;top:674.5px;width:10px;height:19px;background:#4a4a4a;"></div>
<span class="t" style="left:1877.5px;top:669.5px;font-size:14px;line-height:20px;color:#e8e8e8;font-weight:700;font-style:italic;transform:scaleX(0.923);">fx</span>
<svg class="b" style="left:1894.5px;top:677px;" width="8" height="6" viewBox="0 0 8 6"><path d="M0.6 4.8 L4 1.2 L7.4 4.8" fill="none" stroke="#d0d0d0" stroke-width="1.1"/></svg>
<svg class="b" style="left:1683.6px;top:696.4px;" width="14" height="10" viewBox="0 0 14 10"><path d="M0.2 4.6 Q6.6 -3.6 13 4.6 Q6.6 12.8 0.2 4.6 Z" fill="#dedede"/><circle cx="6.6" cy="4.4" r="2.9" fill="#535353"/><circle cx="6.6" cy="4.4" r="1.5" fill="#dedede"/></svg>
<span class="t" style="left:1703px;top:692.0px;font-size:12px;line-height:18px;color:#f0f0f0;transform:scaleX(0.937);">効果</span>
<svg class="b" style="left:1700.6px;top:715.4px;" width="14" height="10" viewBox="0 0 14 10"><path d="M0.2 4.6 Q6.6 -3.6 13 4.6 Q6.6 12.8 0.2 4.6 Z" fill="#dedede"/><circle cx="6.6" cy="4.4" r="2.9" fill="#535353"/><circle cx="6.6" cy="4.4" r="1.5" fill="#dedede"/></svg>
<span class="t" style="left:1720px;top:711.0px;font-size:12px;line-height:18px;color:#f0f0f0;transform:scaleX(0.760);">カラーオーバーレイ</span>
<span class="t" style="left:1720px;top:730.0px;font-size:12px;line-height:18px;color:#f0f0f0;transform:scaleX(0.752);">グラデーションオーバーレイ</span>
<div class="b" style="left:1665px;top:748.5px;width:239px;height:1px;background:#484848;"></div>
<svg class="b" style="left:1678px;top:756px;" width="13" height="14" viewBox="0 0 13 14"><path d="M3.5 3.6 V2.2 H9.5 V3.6 M6.5 2.2 V8.6 M5.2 8.6 H7.8" fill="none" stroke="#a9a9a9" stroke-width="1"/><path d="M0.3 13.4 Q6.5 8 12.7 13.4" fill="none" stroke="#a9a9a9" stroke-width="1.1"/></svg>
<span class="t" style="left:1710px;top:754.0px;font-size:12px;line-height:18px;color:#f0f0f0;transform:scaleX(0.869);">VINTAGE</span>
<span class="t" style="left:1759.3px;top:754.0px;font-size:12px;line-height:18px;color:#f0f0f0;transform:scaleX(0.735);">のコピー</span>
<span class="t" style="left:1800px;top:754.0px;font-size:12px;line-height:18px;color:#f0f0f0;transform:scaleX(0.897);">2</span>
<div class="b" style="left:1893.5px;top:757.5px;width:10px;height:19px;background:#4a4a4a;"></div>
<span class="t" style="left:1877.5px;top:752.5px;font-size:14px;line-height:20px;color:#e8e8e8;font-weight:700;font-style:italic;transform:scaleX(0.923);">fx</span>
<svg class="b" style="left:1894.5px;top:760px;" width="8" height="6" viewBox="0 0 8 6"><path d="M0.6 4.8 L4 1.2 L7.4 4.8" fill="none" stroke="#d0d0d0" stroke-width="1.1"/></svg>
<svg class="b" style="left:1683.6px;top:779.4px;" width="14" height="10" viewBox="0 0 14 10"><path d="M0.2 4.6 Q6.6 -3.6 13 4.6 Q6.6 12.8 0.2 4.6 Z" fill="#dedede"/><circle cx="6.6" cy="4.4" r="2.9" fill="#535353"/><circle cx="6.6" cy="4.4" r="1.5" fill="#dedede"/></svg>
<span class="t" style="left:1703px;top:775.0px;font-size:12px;line-height:18px;color:#f0f0f0;transform:scaleX(0.937);">効果</span>
<svg class="b" style="left:1700.6px;top:798.4px;" width="14" height="10" viewBox="0 0 14 10"><path d="M0.2 4.6 Q6.6 -3.6 13 4.6 Q6.6 12.8 0.2 4.6 Z" fill="#dedede"/><circle cx="6.6" cy="4.4" r="2.9" fill="#535353"/><circle cx="6.6" cy="4.4" r="1.5" fill="#dedede"/></svg>
<span class="t" style="left:1720px;top:794.0px;font-size:12px;line-height:18px;color:#f0f0f0;transform:scaleX(0.972);">境界線</span>
<svg class="b" style="left:1700.6px;top:817.9px;" width="14" height="10" viewBox="0 0 14 10"><path d="M0.2 4.6 Q6.6 -3.6 13 4.6 Q6.6 12.8 0.2 4.6 Z" fill="#dedede"/><circle cx="6.6" cy="4.4" r="2.9" fill="#535353"/><circle cx="6.6" cy="4.4" r="1.5" fill="#dedede"/></svg>
<span class="t" style="left:1720px;top:813.5px;font-size:12px;line-height:18px;color:#f0f0f0;transform:scaleX(0.760);">カラーオーバーレイ</span>
<span class="t" style="left:1720px;top:832.0px;font-size:12px;line-height:18px;color:#f0f0f0;transform:scaleX(0.752);">グラデーションオーバーレイ</span>
<svg class="b" style="left:1683.6px;top:880.9px;" width="14" height="10" viewBox="0 0 14 10"><path d="M0.2 4.6 Q6.6 -3.6 13 4.6 Q6.6 12.8 0.2 4.6 Z" fill="#dedede"/><circle cx="6.6" cy="4.4" r="2.9" fill="#535353"/><circle cx="6.6" cy="4.4" r="1.5" fill="#dedede"/></svg>
<span class="t" style="left:1703px;top:876.5px;font-size:12px;line-height:18px;color:#f0f0f0;transform:scaleX(0.937);">効果</span>
<div class="b" style="left:1634px;top:846.5px;width:270px;height:5px;background:#535353;"></div>
<div class="b" style="left:1665px;top:851.7px;width:239px;height:27px;background:#6b6b6b;"></div>
<svg class="b" style="left:1666.5px;top:854.7px;" width="36" height="21" viewBox="0 0 36 21"><path d="M0.6 5 V0.6 H8 M28 0.6 H35.4 V5 M35.4 16 V20.4 H28 M8 20.4 H0.6 V16" fill="none" stroke="#f0f0f0" stroke-width="1.2"/></svg>
<svg class="b" style="left:1678px;top:858.2px;" width="13" height="14" viewBox="0 0 13 14"><path d="M3.5 3.6 V2.2 H9.5 V3.6 M6.5 2.2 V8.6 M5.2 8.6 H7.8" fill="none" stroke="#e8e8e8" stroke-width="1"/><path d="M0.3 13.4 Q6.5 8 12.7 13.4" fill="none" stroke="#e8e8e8" stroke-width="1.1"/></svg>
<span class="t" style="left:1710px;top:856.2px;font-size:12px;line-height:18px;color:#f0f0f0;transform:scaleX(0.869);">VINTAGE</span>
<span class="t" style="left:1759.3px;top:856.2px;font-size:12px;line-height:18px;color:#f0f0f0;transform:scaleX(0.735);">のコピー</span>
<span class="t" style="left:1800px;top:856.2px;font-size:12px;line-height:18px;color:#f0f0f0;transform:scaleX(0.897);">3</span>
<div class="b" style="left:1893.5px;top:851.7px;width:10px;height:27px;background:#626262;"></div>
<span class="t" style="left:1877.5px;top:854.7px;font-size:14px;line-height:20px;color:#e8e8e8;font-weight:700;font-style:italic;transform:scaleX(0.923);">fx</span>
<svg class="b" style="left:1894.5px;top:862.2px;" width="8" height="6" viewBox="0 0 8 6"><path d="M0.6 4.8 L4 1.2 L7.4 4.8" fill="none" stroke="#d0d0d0" stroke-width="1.1"/></svg>
<svg class="b" style="left:1643.1px;top:860.9px;" width="14" height="10" viewBox="0 0 14 10"><path d="M0.2 4.6 Q6.6 -3.6 13 4.6 Q6.6 12.8 0.2 4.6 Z" fill="#dedede"/><circle cx="6.6" cy="4.4" r="2.9" fill="#535353"/><circle cx="6.6" cy="4.4" r="1.5" fill="#dedede"/></svg>
<svg class="b" style="left:1700.6px;top:899.9px;" width="14" height="10" viewBox="0 0 14 10"><path d="M0.2 4.6 Q6.6 -3.6 13 4.6 Q6.6 12.8 0.2 4.6 Z" fill="#dedede"/><circle cx="6.6" cy="4.4" r="2.9" fill="#535353"/><circle cx="6.6" cy="4.4" r="1.5" fill="#dedede"/></svg>
<span class="t" style="left:1720px;top:895.5px;font-size:12px;line-height:18px;color:#f0f0f0;transform:scaleX(0.972);">境界線</span>
<svg class="b" style="left:1700.6px;top:919.4px;" width="14" height="10" viewBox="0 0 14 10"><path d="M0.2 4.6 Q6.6 -3.6 13 4.6 Q6.6 12.8 0.2 4.6 Z" fill="#dedede"/><circle cx="6.6" cy="4.4" r="2.9" fill="#535353"/><circle cx="6.6" cy="4.4" r="1.5" fill="#dedede"/></svg>
<span class="t" style="left:1720px;top:915.0px;font-size:12px;line-height:18px;color:#f0f0f0;transform:scaleX(0.760);">カラーオーバーレイ</span>
<span class="t" style="left:1720px;top:934.5px;font-size:12px;line-height:18px;color:#f0f0f0;transform:scaleX(0.752);">グラデーションオーバーレイ</span>
<div class="b" style="left:1634px;top:952.5px;width:270px;height:1px;background:#484848;"></div>
<svg class="b" style="left:1643.1px;top:962.4px;" width="14" height="10" viewBox="0 0 14 10"><path d="M0.2 4.6 Q6.6 -3.6 13 4.6 Q6.6 12.8 0.2 4.6 Z" fill="#dedede"/><circle cx="6.6" cy="4.4" r="2.9" fill="#535353"/><circle cx="6.6" cy="4.4" r="1.5" fill="#dedede"/></svg>
<div class="b" style="left:1668px;top:958px;width:31.5px;height:16.5px;background:linear-gradient(90deg,#535353 0 7px,#2a2a2a 7px,#c8c8c8 24px,#535353 24px);border:1px solid #3a3a3a;"></div>
<svg class="b" style="left:1703.5px;top:959.5px;" width="8" height="15" viewBox="0 0 8 15"><rect x="1.2" y="0.8" width="5.2" height="6.4" rx="2.4" fill="none" stroke="#e0e0e0" stroke-width="1.4"/><rect x="1.2" y="7.8" width="5.2" height="6.4" rx="2.4" fill="none" stroke="#e0e0e0" stroke-width="1.4"/><path d="M3.8 4.5 V10.5" stroke="#e0e0e0" stroke-width="1.4"/></svg>
<div class="b" style="left:1715px;top:958px;width:31.5px;height:16.5px;background:#fff;border:1px solid #2a2a2a;"></div>
<span class="t" style="left:1756.7px;top:957.7px;font-size:12px;line-height:18px;color:#f0f0f0;transform:scaleX(0.746);">グラデーション</span>
<span class="t" style="left:1824.9px;top:957.7px;font-size:12px;line-height:18px;color:#f0f0f0;transform:scaleX(0.822);">1</span>
<div class="b" style="left:1634px;top:978px;width:270px;height:1px;background:#484848;"></div>
<svg class="b" style="left:1643.1px;top:988.4px;" width="14" height="10" viewBox="0 0 14 10"><path d="M0.2 4.6 Q6.6 -3.6 13 4.6 Q6.6 12.8 0.2 4.6 Z" fill="#dedede"/><circle cx="6.6" cy="4.4" r="2.9" fill="#535353"/><circle cx="6.6" cy="4.4" r="1.5" fill="#dedede"/></svg>
<div class="b" style="left:1668px;top:985px;width:31.5px;height:16.5px;background:#fff;border:1px solid #2a2a2a;"></div>
<span class="t" style="left:1709.5px;top:984.3px;font-size:12px;line-height:18px;color:#f0f0f0;transform:scaleX(0.937);">背景</span>
<svg class="b" style="left:1877px;top:986.5px;" width="10" height="13" viewBox="0 0 10 13"><path d="M2.4 6 V3.8 A2.6 2.6 0 0 1 7.6 3.8 V6" fill="none" stroke="#e0e0e0" stroke-width="1.3"/><rect x="0.6" y="5.8" width="8.8" height="6.4" rx="1" fill="none" stroke="#e0e0e0" stroke-width="1.2"/><circle cx="5" cy="9" r="1" fill="#e0e0e0"/></svg>
<div class="b" style="left:1634px;top:1004.5px;width:286px;height:1px;background:#484848;"></div>
<svg class="b" style="left:1717px;top:1014.5px;" width="15" height="8" viewBox="0 0 15 8"><path d="M6 1 H4 A3 3 0 0 0 4 7 H6 M9 1 H11 A3 3 0 0 1 11 7 H9 M4.5 4 H10.5" fill="none" stroke="#8c8c8c" stroke-width="1.4"/></svg>
<span class="t" style="left:1745.5px;top:1008.0px;font-size:14px;line-height:20px;color:#8c8c8c;font-weight:700;font-style:italic;transform:scaleX(0.923);">fx</span>
<svg class="b" style="left:1771px;top:1012.5px;" width="13" height="11" viewBox="0 0 13 11"><rect x="0" y="0" width="13" height="11" rx="1" fill="#8c8c8c"/><circle cx="6.5" cy="5.5" r="3" fill="#535353"/></svg>
<svg class="b" style="left:1799.5px;top:1013px;" width="12" height="12" viewBox="0 0 12 12"><circle cx="6" cy="6" r="5" fill="none" stroke="#8c8c8c" stroke-width="1.2"/><path d="M9.6 2.4 A5 5 0 0 1 2.4 9.6 Z" fill="#8c8c8c"/></svg>
<svg class="b" style="left:1825.5px;top:1012.5px;" width="13" height="11" viewBox="0 0 13 11"><path d="M0 1 H5 L6.2 2.4 H13 V11 H0 Z" fill="#8c8c8c"/></svg>
<svg class="b" style="left:1853.5px;top:1013px;" width="12" height="12" viewBox="0 0 12 12"><rect x="0.6" y="0.6" width="10.6" height="10.6" fill="none" stroke="#8c8c8c" stroke-width="1.1"/><path d="M6 3.2 V8.8 M3.2 6 H8.8" stroke="#8c8c8c" stroke-width="1.2"/></svg>
<svg class="b" style="left:1880px;top:1012px;" width="11" height="13" viewBox="0 0 11 13"><path d="M0.3 2.6 H10.3 M3.3 2.6 V0.8 H7.3 V2.6 M1.6 3 V12.2 H9 V3 M3.8 5 V10.3 M5.3 5 V10.3 M6.8 5 V10.3" fill="none" stroke="#8c8c8c" stroke-width="1.1"/></svg>
<div class="b" style="left:1594px;top:1029px;width:326px;height:3px;background:#383838;"></div>
<div class="b" style="left:853px;top:261px;width:821px;height:521px;background:#535353;border-radius:8px;box-shadow:0 22px 50px 4px rgba(0,0,0,.34),0 4px 18px rgba(0,0,0,.24),0 0 1px rgba(0,0,0,.6);overflow:hidden;"><div class="b" style="left:0;top:0;width:821px;height:30px;background:#fff"></div></div>
<span class="t" style="left:861.5px;top:267.0px;font-size:12px;line-height:18px;color:#1a1a1a;transform:scaleX(0.758);">レイヤースタイル</span>
<svg class="b" style="left:1653px;top:270px;" width="12" height="12" viewBox="0 0 12 12"><path d="M0.7 0.7 L11.3 11.3 M11.3 0.7 L0.7 11.3" stroke="#111" stroke-width="1.1"/></svg>
<div class="b" style="left:863px;top:301px;width:230px;height:471px;border:1px solid #444;"></div>
<div class="b" style="left:1075px;top:303px;width:16px;height:441px;background:#4a4a4a;"></div>
<div class="b" style="left:865px;top:329px;width:210px;height:1px;background:#3f3f3f;"></div>
<span class="t" style="left:871.5px;top:307.5px;font-size:12px;line-height:18px;color:#dedede;transform:scaleX(0.750);">スタイル</span>
<div class="b" style="left:865px;top:355px;width:210px;height:1px;background:#3f3f3f;"></div>
<span class="t" style="left:871.5px;top:333.5px;font-size:12px;line-height:18px;color:#dedede;transform:scaleX(0.858);">レイヤー効果</span>
<div class="b" style="left:865px;top:381px;width:210px;height:1px;background:#3f3f3f;"></div>
<div class="b" style="left:870px;top:363px;width:12px;height:12px;background:#4a4a4a;border:1px solid #7c7c7c;border-radius:3px;"></div>
<span class="t" style="left:888px;top:359.5px;font-size:12px;line-height:18px;color:#e8e8e8;transform:scaleX(0.776);">ベベルとエンボス</span>
<div class="b" style="left:865px;top:407px;width:210px;height:1px;background:#3f3f3f;"></div>
<div class="b" style="left:880px;top:389px;width:12px;height:12px;background:#4a4a4a;border:1px solid #7c7c7c;border-radius:3px;"></div>
<span class="t" style="left:897.5px;top:385.5px;font-size:12px;line-height:18px;color:#e8e8e8;transform:scaleX(0.958);">輪郭</span>
<div class="b" style="left:865px;top:433px;width:210px;height:1px;background:#3f3f3f;"></div>
<div class="b" style="left:880px;top:415px;width:12px;height:12px;background:#4a4a4a;border:1px solid #7c7c7c;border-radius:3px;"></div>
<span class="t" style="left:897.5px;top:411.5px;font-size:12px;line-height:18px;color:#e8e8e8;transform:scaleX(0.722);">テクスチャ</span>
<div class="b" style="left:865px;top:459px;width:210px;height:1px;background:#3f3f3f;"></div>
<div class="b" style="left:870px;top:441px;width:12px;height:12px;background:#e2e2e2;border-radius:3px;"></div>
<svg class="b" style="left:870px;top:441px;" width="12" height="12" viewBox="0 0 12 12"><path d="M2.6 6.2 L5.1 8.8 L9.6 3.2" fill="none" stroke="#222" stroke-width="2"/></svg>
<span class="t" style="left:888px;top:437.5px;font-size:12px;line-height:18px;color:#e8e8e8;transform:scaleX(0.958);">境界線</span>
<svg class="b" style="left:1056px;top:439px;" width="16" height="16" viewBox="0 0 16 16"><rect x="1.5" y="1.5" width="13" height="13" fill="none" stroke="#e0e0e0" stroke-width="1.1"/><path d="M8 4.5 V11.5 M4.5 8 H11.5" stroke="#f0f0f0" stroke-width="1.8"/></svg>
<div class="b" style="left:865px;top:485px;width:210px;height:1px;background:#3f3f3f;"></div>
<div class="b" style="left:870px;top:467px;width:12px;height:12px;background:#4a4a4a;border:1px solid #7c7c7c;border-radius:3px;"></div>
<span class="t" style="left:888px;top:463.5px;font-size:12px;line-height:18px;color:#e8e8e8;transform:scaleX(0.876);">シャドウ (内側)</span>
<svg class="b" style="left:1056px;top:465px;" width="16" height="16" viewBox="0 0 16 16"><rect x="1.5" y="1.5" width="13" height="13" fill="none" stroke="#e0e0e0" stroke-width="1.1"/><path d="M8 4.5 V11.5 M4.5 8 H11.5" stroke="#f0f0f0" stroke-width="1.8"/></svg>
<div class="b" style="left:865px;top:511px;width:210px;height:1px;background:#3f3f3f;"></div>
<div class="b" style="left:870px;top:493px;width:12px;height:12px;background:#4a4a4a;border:1px solid #7c7c7c;border-radius:3px;"></div>
<span class="t" style="left:888px;top:489.5px;font-size:12px;line-height:18px;color:#e8e8e8;transform:scaleX(1.020);">光彩 (内側)</span>
<div class="b" style="left:865px;top:537px;width:210px;height:1px;background:#3f3f3f;"></div>
<div class="b" style="left:870px;top:519px;width:12px;height:12px;background:#4a4a4a;border:1px solid #7c7c7c;border-radius:3px;"></div>
<span class="t" style="left:888px;top:515.5px;font-size:12px;line-height:18px;color:#e8e8e8;transform:scaleX(0.777);">サテン</span>
<div class="b" style="left:865px;top:538px;width:210px;height:25px;background:#6b6b6b;"></div>
<div class="b" style="left:865px;top:563px;width:210px;height:1px;background:#3f3f3f;"></div>
<div class="b" style="left:870px;top:545px;width:12px;height:12px;background:#e2e2e2;border-radius:3px;"></div>
<svg class="b" style="left:870px;top:545px;" width="12" height="12" viewBox="0 0 12 12"><path d="M2.6 6.2 L5.1 8.8 L9.6 3.2" fill="none" stroke="#222" stroke-width="2"/></svg>
<span class="t" style="left:888px;top:541.5px;font-size:12px;line-height:18px;color:#e8e8e8;transform:scaleX(0.774);">カラーオーバーレイ</span>
<svg class="b" style="left:1056px;top:543px;" width="16" height="16" viewBox="0 0 16 16"><rect x="1.5" y="1.5" width="13" height="13" fill="none" stroke="#e0e0e0" stroke-width="1.1"/><path d="M8 4.5 V11.5 M4.5 8 H11.5" stroke="#f0f0f0" stroke-width="1.8"/></svg>
<div class="b" style="left:865px;top:589px;width:210px;height:1px;background:#3f3f3f;"></div>
<div class="b" style="left:870px;top:571px;width:12px;height:12px;background:#4a4a4a;border:1px solid #7c7c7c;border-radius:3px;"></div>
<span class="t" style="left:888px;top:567.5px;font-size:12px;line-height:18px;color:#e8e8e8;transform:scaleX(0.758);">グラデーションオーバーレイ</span>
<svg class="b" style="left:1056px;top:569px;" width="16" height="16" viewBox="0 0 16 16"><rect x="1.5" y="1.5" width="13" height="13" fill="none" stroke="#e0e0e0" stroke-width="1.1"/><path d="M8 4.5 V11.5 M4.5 8 H11.5" stroke="#f0f0f0" stroke-width="1.8"/></svg>
<div class="b" style="left:865px;top:615px;width:210px;height:1px;background:#3f3f3f;"></div>
<div class="b" style="left:870px;top:597px;width:12px;height:12px;background:#4a4a4a;border:1px solid #7c7c7c;border-radius:3px;"></div>
<span class="t" style="left:888px;top:593.5px;font-size:12px;line-height:18px;color:#e8e8e8;transform:scaleX(0.784);">パターンオーバーレイ</span>
<div class="b" style="left:865px;top:641px;width:210px;height:1px;background:#3f3f3f;"></div>
<div class="b" style="left:870px;top:623px;width:12px;height:12px;background:#4a4a4a;border:1px solid #7c7c7c;border-radius:3px;"></div>
<span class="t" style="left:888px;top:619.5px;font-size:12px;line-height:18px;color:#e8e8e8;transform:scaleX(1.037);">光彩 (外側)</span>
<div class="b" style="left:865px;top:667px;width:210px;height:1px;background:#3f3f3f;"></div>
<div class="b" style="left:870px;top:649px;width:12px;height:12px;background:#4a4a4a;border:1px solid #7c7c7c;border-radius:3px;"></div>
<span class="t" style="left:888px;top:645.5px;font-size:12px;line-height:18px;color:#e8e8e8;transform:scaleX(0.729);">ドロップシャドウ</span>
<svg class="b" style="left:1056px;top:647px;" width="16" height="16" viewBox="0 0 16 16"><rect x="1.5" y="1.5" width="13" height="13" fill="none" stroke="#e0e0e0" stroke-width="1.1"/><path d="M8 4.5 V11.5 M4.5 8 H11.5" stroke="#f0f0f0" stroke-width="1.8"/></svg>
<span class="t" style="left:873.5px;top:747.0px;font-size:15px;line-height:21px;color:#d8d8d8;font-style:italic;transform:scaleX(1.028);">fx</span>
<svg class="b" style="left:886px;top:763px;" width="4" height="3" viewBox="0 0 4 3"><path d="M0 0 H4 L2 2.5 Z" fill="#ccc"/></svg>
<svg class="b" style="left:899px;top:752px;" width="13" height="13" viewBox="0 0 13 13"><path d="M6.5 0.5 L12 6.5 H8.8 V12 H4.2 V6.5 H1 Z" fill="#8a8a8a"/></svg>
<svg class="b" style="left:926px;top:752px;" width="13" height="13" viewBox="0 0 13 13"><path d="M6.5 12.5 L12 6.5 H8.8 V1 H4.2 V6.5 H1 Z" fill="#8a8a8a"/></svg>
<svg class="b" style="left:1071px;top:752px;" width="12" height="14" viewBox="0 0 12 14"><path d="M0.5 3 H10.5 M3.5 3 V1 H7.5 V3 M1.8 3.5 V12.5 H9.2 V3.5 M4 5.5 V10.5 M5.5 5.5 V10.5 M7 5.5 V10.5" fill="none" stroke="#e0e0e0" stroke-width="1.1"/></svg>
<div class="b" style="left:1109px;top:308.5px;width:406px;height:463.5px;border:1px solid #444;"></div>
<div class="b" style="left:1126px;top:302px;width:92px;height:14px;background:#535353;"></div>
<span class="t" style="left:1130.5px;top:299.8px;font-size:12px;line-height:18px;color:#e8e8e8;transform:scaleX(0.769);">カラーオーバーレイ</span>
<div class="b" style="left:1119px;top:323px;width:386px;height:72px;border:1px solid #444;"></div>
<div class="b" style="left:1135px;top:316px;width:43px;height:14px;background:#535353;"></div>
<span class="t" style="left:1140px;top:314.5px;font-size:12px;line-height:18px;color:#e8e8e8;transform:scaleX(0.944);">表示色</span>
<span class="t" style="left:1154px;top:339.0px;font-size:12px;line-height:18px;color:#e0e0e0;transform:scaleX(0.900);">描画モード :</span>
<div class="b" style="left:1220px;top:338.5px;width:144px;height:22px;background:#454545;border:1px solid #616161;border-radius:4px;"></div>
<span class="t" style="left:1228.5px;top:340.5px;font-size:12px;line-height:18px;color:#f0f0f0;transform:scaleX(0.937);">通常</span>
<svg class="b" style="left:1353px;top:347px;" width="9" height="6" viewBox="0 0 9 6"><path d="M0.7 0.8 L4.5 4.6 L8.3 0.8" fill="none" stroke="#b0b0b0" stroke-width="1.2"/></svg>
<div class="b" style="left:1369px;top:335px;width:37px;height:25px;background:#18104a;border:1px solid #6a6a6a;"></div>
<span class="t" style="left:1141px;top:366.0px;font-size:12px;line-height:18px;color:#e0e0e0;transform:scaleX(0.993);">不透明度(O) :</span>
<div class="b" style="left:1226px;top:370.5px;width:95px;height:3px;background:#787878;border-radius:1.5px;"></div>
<svg class="b" style="left:1315px;top:372px;" width="12" height="11" viewBox="0 0 12 11"><path d="M6 0.5 L11.3 7.5 Q11.3 10.3 8.5 10.3 H3.5 Q0.7 10.3 0.7 7.5 Z" fill="#f0f0f0"/></svg>
<div class="b" style="left:1331px;top:365px;width:41px;height:20px;background:#484848;border:1px solid #666;"></div>
<span class="t" style="left:1334.5px;top:366.5px;font-size:11px;line-height:17px;color:#f0f0f0;transform:scaleX(0.926);">100</span>
<span class="t" style="left:1376px;top:367.0px;font-size:11px;line-height:17px;color:#e0e0e0;transform:scaleX(0.971);">%</span>
<div class="b" style="left:1201px;top:401px;width:103px;height:23px;background:#454545;border:1px solid #616161;border-radius:4px;"></div>
<span class="t" style="left:1213px;top:404.0px;font-size:12px;line-height:18px;color:#f0f0f0;transform:scaleX(0.933);">初期設定にする</span>
<div class="b" style="left:1315px;top:401px;width:107px;height:23px;background:#454545;border:1px solid #616161;border-radius:4px;"></div>
<span class="t" style="left:1327px;top:404.0px;font-size:12px;line-height:18px;color:#f0f0f0;transform:scaleX(0.970);">初期設定に戻す</span>
<div class="b" style="left:1531px;top:303.5px;width:133px;height:25px;border:1.6px solid #3b6fcb;border-radius:13px;"></div>
<span class="t" style="left:1589px;top:306.8px;font-size:13px;line-height:19px;color:#f4f4f4;transform:scaleX(0.878);">OK</span>
<div class="b" style="left:1531px;top:337.5px;width:133px;height:25px;border:1px solid #767676;border-radius:13px;"></div>
<span class="t" style="left:1571px;top:340.8px;font-size:13px;line-height:19px;color:#f4f4f4;transform:scaleX(0.777);">キャンセル</span>
<div class="b" style="left:1531px;top:372.5px;width:133px;height:25px;border:1px solid #767676;border-radius:13px;"></div>
<span class="t" style="left:1547.5px;top:375.8px;font-size:13px;line-height:19px;color:#f4f4f4;transform:scaleX(0.906);">新規スタイル(W)...</span>
<div class="b" style="left:1545px;top:409.5px;width:12px;height:12px;background:#e2e2e2;border-radius:3px;"></div>
<svg class="b" style="left:1545px;top:409.5px;" width="12" height="12" viewBox="0 0 12 12"><path d="M2.6 6.2 L5.1 8.8 L9.6 3.2" fill="none" stroke="#222" stroke-width="2"/></svg>
<span class="t" style="left:1565px;top:406.3px;font-size:12px;line-height:18px;color:#f0f0f0;transform:scaleX(0.862);">プレビュー(V)</span>
<div class="b" style="left:1532.5px;top:433.5px;width:129px;height:128.5px;background:#2c2c2c;"></div>
<div class="b" style="left:1561px;top:462px;width:72px;height:72px;background:#18104a;border:3px solid #fffbc8;border-radius:4px;"></div>
<div class="b" style="left:1099px;top:292px;width:384px;height:151px;border:3px solid #f00;"></div>
<div class="b" style="left:856.5px;top:531.5px;width:228.5px;height:38.5px;border:3px solid #f00;border-radius:2px;"></div>
<div class="b" style="left:1364.5px;top:327px;width:55px;height:41px;border:3px solid #f00;"></div>
<svg class="b" style="left:1380px;top:360px;" width="40" height="130" viewBox="0 0 40 130"><path d="M26.5 7.5 L11.5 125" stroke="#f00" stroke-width="2" fill="none"/></svg>
<div class="b" style="left:1220px;top:484px;width:218px;height:61px;background:#000;border:3px solid #f00;"></div>
<span class="t" style="left:1247.5px;top:489.6px;font-size:44.6px;line-height:52px;color:#f00;-webkit-text-stroke:0.5px #f00;letter-spacing:1px;transform:scaleX(0.891);">#18104a</span>
<div class="b" style="left:1628px;top:841.5px;width:283.5px;height:47.5px;border:4px solid #f00;border-radius:2px;"></div>
</body></html>
